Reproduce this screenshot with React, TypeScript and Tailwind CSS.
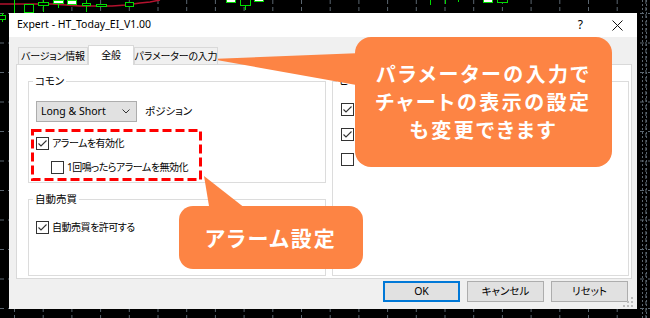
import React from 'react';

const ui = "font-['Noto_Sans','Noto_Sans_CJK_JP',sans-serif] [font-feature-settings:'palt']";

const candles = [
  { x: 24, w: 9, y1: 4, y2: 12, fill: '#000' },
  { x: 38, w: 10, y1: 2, y2: 5, fill: '#000' },
  { x: 53, w: 10, y1: 0, y2: 3, fill: '#fff' },
  { x: 67, w: 9, y1: 0, y2: 4, fill: '#fff' },
  { x: 82, w: 8, y1: 3, y2: 5, fill: '#000' },
  { x: 96, w: 10, y1: 4, y2: 6, fill: '#000' },
  { x: 125, w: 8, y1: 2, y2: 6, fill: '#000' },
  { x: -3, w: 8, y1: 15, y2: 19, fill: '#000' },
  { x: 226, w: 9, y1: -1, y2: 2, fill: '#fff' },
  { x: 240, w: 10, y1: -1, y2: 5, fill: '#000' },
  { x: 254, w: 9, y1: -1, y2: 1, fill: '#fff' },
  { x: 483, w: 9, y1: -1, y2: 2, fill: '#fff' },
  { x: 497, w: 10, y1: -1, y2: 2, fill: '#000' },
];

const wicks = [
  { x: 14, y1: 0, y2: 13 },
  { x: 43, y1: 0, y2: 12 },
  { x: 86, y1: 0, y2: 12 },
  { x: 58, y1: 3, y2: 8 },
  { x: 2, y1: 13, y2: 22 },
  { x: 245, y1: 5, y2: 10 },
  { x: 430, y1: 0, y2: 5 },
  { x: 445, y1: 0, y2: 4 },
  { x: 458, y1: 0, y2: 2 },
];

function ChartBg() {
  const vx = Array.from({ length: 23 }, (_, i) => 14.5 + i * 28.7);
  const hy = Array.from({ length: 11 }, (_, i) => 13.5 + i * 29.5);
  return (
    <svg className="absolute inset-0" width="650" height="318" viewBox="0 0 650 318">
      {vx.map((x) => (
        <line key={'v' + x} x1={x} x2={x} y1={0} y2={318} stroke="#5b6670" strokeDasharray="4 3" />
      ))}
      {hy.map((y) => (
        <line key={'h' + y} x1={0} x2={650} y1={y} y2={y} stroke="#5b6670" strokeDasharray="4 4" />
      ))}
      <line x1={642.5} x2={642.5} y1={0} y2={318} stroke="#5b6670" strokeDasharray="2 2" />
      <line x1={646.5} x2={646.5} y1={0} y2={318} stroke="#5b6670" strokeDasharray="2 2" />
      <polyline
        points="0,4 30,4 52,4 66,5 80,6 112,6 126,5 140,3 150,2 160,0"
        fill="none"
        stroke="#b3122e"
        strokeWidth="1.5"
      />
      {wicks.map((w, i) => (
        <line key={'w' + i} x1={w.x + 0.5} x2={w.x + 0.5} y1={w.y1} y2={w.y2} stroke="#00dd00" />
      ))}
      {candles.map((c, i) => (
        <rect key={'c' + i} x={c.x + 0.5} y={c.y1 + 0.5} width={c.w} height={c.y2 - c.y1} fill={c.fill} stroke="#00dd00" />
      ))}
    </svg>
  );
}

function CheckBox({ checked }: { checked?: boolean }) {
  return (
    <span className="w-[13px] h-[13px] border border-[#333333] bg-white flex items-center justify-center shrink-0">
      {checked && (
        <svg width="11" height="11" viewBox="0 0 11 11">
          <polyline points="1.5,5.5 4,8 9.5,2.5" fill="none" stroke="#333333" strokeWidth="1.1" />
        </svg>
      )}
    </span>
  );
}

function Check({ checked, label, className = '' }: { checked?: boolean; label?: string; className?: string }) {
  return (
    <div className={`flex items-center h-[13px] ${className}`}>
      <CheckBox checked={checked} />
      {label && (
        <span className="ml-[3px] text-[10px] leading-[13px] tracking-[-0.5px] text-black whitespace-nowrap">{label}</span>
      )}
    </div>
  );
}

function Group({ title, className, children }: { title: string; className: string; children: React.ReactNode }) {
  return (
    <fieldset className={`border border-[#dcdcdc] ${className}`}>
      <legend className="ml-[4px] px-[2px] text-[10.5px] leading-[14px] text-black whitespace-nowrap">{title}</legend>
      {children}
    </fieldset>
  );
}

export default function App() {
  return (
    <div className={`relative w-[650px] h-[318px] overflow-hidden bg-black ${ui}`}>
      <ChartBg />

      <div className="relative pt-[13px] pl-[9px]">
        <div className="w-[628px] h-[296px] flex flex-col bg-[#f0f0f0]">
          {/* title bar */}
          <div className="h-[24px] bg-white flex items-center pl-[8px] pr-[14px] shrink-0">
            <span className="text-[10.5px] text-black">Expert - HT_Today_EI_V1.00</span>
            <span className="ml-auto text-[12px] text-black">?</span>
            <svg className="ml-[29px]" width="11" height="11" viewBox="0 0 11 11">
              <path d="M0.5 0.5 L10.5 10.5 M10.5 0.5 L0.5 10.5" stroke="#111" strokeWidth="1" />
            </svg>
          </div>

          <div className="flex-1 pt-[8px]">
            {/* tabs */}
            <div className="flex items-start pl-[9px] h-[19px] relative z-10 text-[10px] tracking-[-0.2px] text-black whitespace-nowrap">
              <div className="mt-[2px] w-[70px] h-[17px] border border-b-0 border-[#d9d9d9] bg-[#f0f0f0] flex items-center justify-center">
                バージョン情報
              </div>
              <div className="w-[46px] h-[20px] border border-b-0 border-[#d9d9d9] bg-white flex items-center justify-center pb-[1px]">
                全般
              </div>
              <div className="mt-[2px] w-[84px] h-[17px] border border-b-0 border-[#d9d9d9] bg-[#f0f0f0] flex items-center justify-center">
                パラメーターの入力
              </div>
            </div>

            {/* panel */}
            <div className="ml-[7px] w-[616px] h-[215px] border border-[#d9d9d9] bg-white flex pl-[11px] pt-[9px] gap-[6px]">
              <div className="flex flex-col w-[298px]">
                <Group title="コモン" className="h-[109px]">
                  <div className="px-[7px]">
                    <div className="flex items-center mt-[13px]">
                      <div className="w-[101px] h-[21px] border border-[#adadad] bg-[#e1e1e1] flex items-center pl-[4px] pr-[6px]">
                        <span className="text-[10.5px] text-black">Long &amp; Short</span>
                        <svg className="ml-auto" width="8" height="5" viewBox="0 0 8 5">
                          <polyline points="0.5,0.5 4,4 7.5,0.5" fill="none" stroke="#333" strokeWidth="1" />
                        </svg>
                      </div>
                      <span className="ml-[8px] text-[10.5px] text-black">ポジション</span>
                    </div>
                    <Check checked label="アラームを有効化" className="mt-[15px]" />
                    <Check label="1回鳴ったらアラームを無効化" className="mt-[11px] ml-[15px]" />
                  </div>
                </Group>
                <Group title="自動売買" className="mt-[9px] h-[84px]">
                  <div className="px-[7px]">
                    <Check checked label="自動売買を許可する" className="mt-[15px]" />
                  </div>
                </Group>
              </div>
              <Group title="ヒ" className="w-[297px] h-[202px]">
                <div className="px-[8px] flex flex-col gap-[12px]">
                  <Check checked className="mt-[15px]" />
                  <Check checked />
                  <Check />
                </div>
              </Group>
            </div>

            {/* buttons */}
            <div className="flex justify-end gap-[7px] pr-[9px] mt-[2px] text-[10.5px] text-black">
              <button className="w-[77px] h-[21px] border-2 border-[#0078d7] bg-[#e1e1e1]">OK</button>
              <button className="w-[77px] h-[21px] border border-[#adadad] bg-[#e1e1e1]">キャンセル</button>
              <button className="w-[77px] h-[21px] border border-[#adadad] bg-[#e1e1e1]">リセット</button>
            </div>
          </div>
        </div>
      </div>

      {/* annotations */}
      <svg className="absolute inset-0 pointer-events-none" width="650" height="318" viewBox="0 0 650 318">
        <rect x="32.5" y="130.5" width="168" height="49" fill="none" stroke="#ff0000" strokeWidth="3" strokeDasharray="9 4" />
        <polygon points="211,59 362,53 362,86" fill="#fd8444" />
        <polygon points="204,176 210,212 250,212" fill="#fd8444" />
        <rect x="627" y="301" width="2" height="2" fill="#bdbdbd" />
        <rect x="631" y="301" width="2" height="2" fill="#bdbdbd" />
        <rect x="631" y="297" width="2" height="2" fill="#bdbdbd" />
        <rect x="623" y="305" width="2" height="2" fill="#bdbdbd" />
        <rect x="627" y="305" width="2" height="2" fill="#bdbdbd" />
        <rect x="631" y="305" width="2" height="2" fill="#bdbdbd" />
      </svg>

      <div className="absolute left-[355px] top-[37px] w-[257px] h-[130px] rounded-[16px] bg-[#fd8444] flex flex-col items-center justify-center text-white font-bold text-[20px] leading-[28px] tracking-[2.5px] font-['Noto_Sans_CJK_JP',sans-serif]">
        <span>パラメーターの入力で</span>
        <span>チャートの表示の設定</span>
        <span>も変更できます</span>
      </div>

      <div className="absolute left-[179px] top-[206px] w-[184px] h-[63px] rounded-[14px] bg-[#fd8444] flex items-center justify-center text-white font-bold text-[21px] tracking-[2px] font-['Noto_Sans_CJK_JP',sans-serif]">
        アラーム設定
      </div>
    </div>
  );
}
